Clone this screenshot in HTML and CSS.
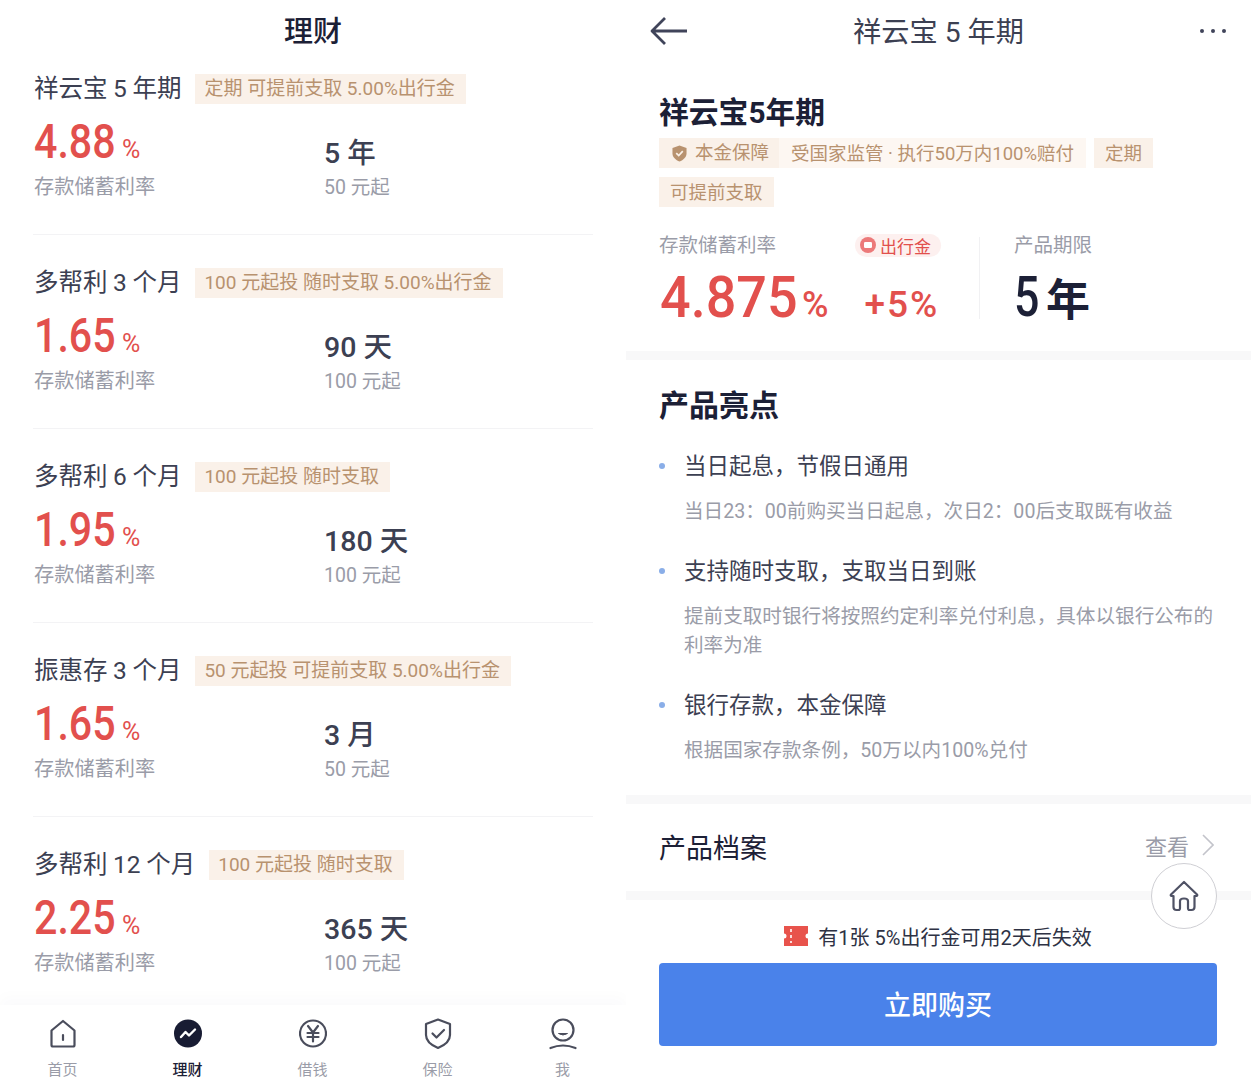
FILE: index.html
```html
<!DOCTYPE html>
<html lang="zh-CN">
<head>
<meta charset="utf-8">
<title>理财</title>
<link rel="stylesheet" href="styles.css">
</head>
<body>
<main class="screens">
  <section class="pane list-pane">
    <header class="list-head">理财</header>
    <div class="list">
      <article class="item">
        <div class="item-top"><h3 class="item-name">祥云宝 5 年期</h3><span class="item-tag">定期 可提前支取 5.00%出行金</span></div>
        <div class="item-body">
          <div class="col-rate"><div class="rate"><span class="rate-num"><b>4.88</b></span><small>%</small></div><div class="sub">存款储蓄利率</div></div>
          <div class="col-term"><div class="term">5 年</div><div class="sub">50 元起</div></div>
        </div>
      </article>
      <article class="item">
        <div class="item-top"><h3 class="item-name">多帮利 3 个月</h3><span class="item-tag">100 元起投 随时支取 5.00%出行金</span></div>
        <div class="item-body">
          <div class="col-rate"><div class="rate"><span class="rate-num"><b>1.65</b></span><small>%</small></div><div class="sub">存款储蓄利率</div></div>
          <div class="col-term"><div class="term">90 天</div><div class="sub">100 元起</div></div>
        </div>
      </article>
      <article class="item">
        <div class="item-top"><h3 class="item-name">多帮利 6 个月</h3><span class="item-tag">100 元起投 随时支取</span></div>
        <div class="item-body">
          <div class="col-rate"><div class="rate"><span class="rate-num"><b>1.95</b></span><small>%</small></div><div class="sub">存款储蓄利率</div></div>
          <div class="col-term"><div class="term">180 天</div><div class="sub">100 元起</div></div>
        </div>
      </article>
      <article class="item">
        <div class="item-top"><h3 class="item-name">振惠存 3 个月</h3><span class="item-tag">50 元起投 可提前支取 5.00%出行金</span></div>
        <div class="item-body">
          <div class="col-rate"><div class="rate"><span class="rate-num"><b>1.65</b></span><small>%</small></div><div class="sub">存款储蓄利率</div></div>
          <div class="col-term"><div class="term">3 月</div><div class="sub">50 元起</div></div>
        </div>
      </article>
      <article class="item item-last">
        <div class="item-top"><h3 class="item-name">多帮利 12 个月</h3><span class="item-tag">100 元起投 随时支取</span></div>
        <div class="item-body">
          <div class="col-rate"><div class="rate"><span class="rate-num"><b>2.25</b></span><small>%</small></div><div class="sub">存款储蓄利率</div></div>
          <div class="col-term"><div class="term">365 天</div><div class="sub">100 元起</div></div>
        </div>
      </article>
    </div>
    <nav class="tabs">
      <a class="tab">
        <svg class="tab-icon" viewBox="0 0 28 32"><path d="M14 3 L25.5 12.5 V27 Q25.5 28.5 24 28.5 H4 Q2.5 28.5 2.5 27 V12.5 Z" fill="none" stroke="#4a4d5c" stroke-width="2.2" stroke-linejoin="round"/><path d="M14 17v5" stroke="#4a4d5c" stroke-width="2.2" stroke-linecap="round"/></svg>
        <span>首页</span>
      </a>
      <a class="tab tab-on">
        <svg class="tab-icon" viewBox="0 0 28 32"><circle cx="14" cy="15.5" r="14" fill="#181c33"/><path d="M7 19 L11.5 14 L15 17.5 L21 11.5" fill="none" stroke="#fff" stroke-width="2.4" stroke-linecap="round" stroke-linejoin="round"/></svg>
        <span>理财</span>
      </a>
      <a class="tab">
        <svg class="tab-icon" viewBox="0 0 28 32"><circle cx="14" cy="15.5" r="13" fill="none" stroke="#4a4d5c" stroke-width="2.2"/><path d="M9 8 L14 14.5 L19 8 M8.5 15 H19.5 M8.5 19 H19.5 M14 14.5 V23.5" fill="none" stroke="#4a4d5c" stroke-width="2.2" stroke-linecap="round" stroke-linejoin="round"/></svg>
        <span>借钱</span>
      </a>
      <a class="tab">
        <svg class="tab-icon" viewBox="0 0 28 32"><path d="M14 1.5 L26 6 V17 C26 23 20 27.5 14 30 C8 27.5 2 23 2 17 V6 Z" fill="none" stroke="#4a4d5c" stroke-width="2.2" stroke-linejoin="round"/><path d="M8.5 15.5 L12.5 19.5 L20 12" fill="none" stroke="#4a4d5c" stroke-width="2.2" stroke-linecap="round" stroke-linejoin="round"/></svg>
        <span>保险</span>
      </a>
      <a class="tab">
        <svg class="tab-icon" viewBox="0 0 28 32"><circle cx="14" cy="12" r="10.5" fill="none" stroke="#4a4d5c" stroke-width="2.2"/><path d="M9.5 15.5 Q14 18.5 18.5 15.5 Z" fill="#4a4d5c" stroke="#4a4d5c" stroke-width="1" stroke-linejoin="round"/><path d="M1.5 30 Q14 25 26.5 30" fill="none" stroke="#4a4d5c" stroke-width="2.2" stroke-linecap="round"/></svg>
        <span>我</span>
      </a>
    </nav>
  </section>

  <section class="pane detail-pane">
    <header class="detail-head">
      <svg class="back" viewBox="0 0 38 30"><path d="M37 15 H2 M15 2 L2 15 L15 28" fill="none" stroke="#40445a" stroke-width="2.8" stroke-linejoin="round"/></svg>
      <h1 class="detail-title">祥云宝 5 年期</h1>
      <svg class="more" viewBox="0 0 28 6"><circle cx="3" cy="3" r="2" fill="#40445a"/><circle cx="14" cy="3" r="2" fill="#40445a"/><circle cx="25" cy="3" r="2" fill="#40445a"/></svg>
    </header>

    <div class="summary">
      <h2 class="prod-name">祥云宝5年期</h2>
      <div class="tag-wrap">
        <div class="tag-guard">
          <span class="guard-main">
            <svg class="guard-icon" viewBox="0 0 16 18"><path d="M8 0.5 L15.5 3 V9 C15.5 13 12 16 8 17.5 C4 16 0.5 13 0.5 9 V3 Z" fill="#b8926f"/><path d="M4.5 8.5 L7.2 11.2 L11.5 6.5" fill="none" stroke="#faf1e8" stroke-width="1.8"/></svg>
            本金保障
          </span>
          <span class="guard-note">受国家监管 · 执行50万内100%赔付</span>
        </div>
        <span class="tag">定期</span>
        <span class="tag">可提前支取</span>
      </div>
      <div class="figures">
        <div class="fig-rate">
          <div class="fig-labels">
            <span class="fig-label">存款储蓄利率</span>
            <span class="bonus">
              <svg class="bonus-icon" viewBox="0 0 16 16"><circle cx="8" cy="8" r="8" fill="#ec7a7a"/><rect x="4" y="5" width="8" height="6" rx="1.2" fill="#fff"/></svg>
              出行金
            </span>
          </div>
          <div class="fig-values">
            <span class="big-rate"><b>4.875</b></span><span class="big-pct">%</span>
            <span class="plus-rate">+5%</span>
          </div>
        </div>
        <div class="fig-divider"></div>
        <div class="fig-term">
          <div class="fig-label">产品期限</div>
          <div class="big-term"><span class="big-num"><b>5</b></span>年</div>
        </div>
      </div>
    </div>

    <div class="gap"></div>

    <div class="points">
      <h2 class="points-title">产品亮点</h2>
      <ul class="point-list">
        <li class="point">
          <h4 class="point-head">当日起息，节假日通用</h4>
          <p class="point-text">当日23：00前购买当日起息，次日2：00后支取既有收益</p>
        </li>
        <li class="point">
          <h4 class="point-head">支持随时支取，支取当日到账</h4>
          <p class="point-text">提前支取时银行将按照约定利率兑付利息，具体以银行公布的利率为准</p>
        </li>
        <li class="point">
          <h4 class="point-head">银行存款，本金保障</h4>
          <p class="point-text">根据国家存款条例，50万以内100%兑付</p>
        </li>
      </ul>
    </div>

    <div class="gap"></div>

    <div class="archive">
      <span class="archive-title">产品档案</span>
      <span class="archive-link">查看
        <svg class="chevron" viewBox="0 0 12 22"><path d="M1 1 L11 11 L1 21" fill="none" stroke="#c3c4cb" stroke-width="1.6"/></svg>
      </span>
    </div>

    <div class="gap"></div>

    <div class="buy">
      <p class="coupon">
        <svg class="coupon-icon" viewBox="0 0 24 20"><path d="M0 0 H24 V7.5 A2.5 2.5 0 0 0 24 12.5 V20 H0 V12.5 A2.5 2.5 0 0 0 0 7.5 Z" fill="#e8534c"/><path d="M7 3 V17" stroke="#fff" stroke-width="1.6" stroke-dasharray="3 3"/></svg>
        有1张 5%出行金可用2天后失效
      </p>
      <button class="buy-btn">立即购买</button>
    </div>

    <div class="home-float">
      <svg viewBox="0 0 30 32"><path d="M15 2 L28 14.5 Q28.8 15.5 27.5 16 H25.5 V27 Q25.5 30 22.5 30 H20.5 Q19 30 19 28 V21 Q19 18.5 15 18.5 Q11 18.5 11 21 V28 Q11 30 9.5 30 H7.5 Q4.5 30 4.5 27 V16 H2.5 Q1.2 15.5 2 14.5 Z" fill="none" stroke="#4f5265" stroke-width="2.2" stroke-linejoin="round"/></svg>
    </div>
  </section>
</main>
</body>
</html>
```
FILE: styles.css
```css
* { box-sizing: border-box; }
html, body { margin: 0; padding: 0; background: #fff; }
body {
  width: 1251px;
  height: 1080px;
  overflow: hidden;
  font-family: Roboto, "Noto Sans CJK SC", sans-serif;
  color: #3c4052;
}
h1, h2, h3, h4, p, ul { margin: 0; padding: 0; font-weight: 400; }
ul { list-style: none; }
b { font-weight: 500; }

.screens { display: grid; grid-template-columns: 626px 625px; height: 1080px; }
.pane { position: relative; height: 1080px; overflow: hidden; display: flex; flex-direction: column; }

/* left list */
.list-head {
  height: 62px;
  line-height: 64px;
  text-align: center;
  font-size: 29px;
  font-weight: 500;
  color: #1c2036;
  flex: none;
}
.list { flex: 1; padding: 0 33px; overflow: hidden; }
.item { height: 194px; padding-top: 33px; border-bottom: 1px solid #f3f3f5; }
.item:first-child { height: 173px; padding-top: 12px; }
.item-last { border-bottom: 0; }
.item-top { display: flex; align-items: center; height: 30px; }
.item-name { font-size: 24.5px; line-height: 32px; word-spacing: -0.5px; color: #3c4052; margin: 0 14px 0 1px; white-space: nowrap; }
.item-tag {
  height: 30px;
  line-height: 30px;
  padding: 0 11px 0 9px;
  font-size: 19px;
  background: #faf1e9;
  color: #b8926f;
  white-space: nowrap;
}
.item-body { display: grid; grid-template-columns: 291px 1fr; }
.rate { display: flex; align-items: baseline; margin-top: 9px; height: 58px; line-height: 58px; color: #e2504d; }
.rate-num { width: 89px; font-size: 49px; }
.rate-num b { display: inline-block; transform: scaleX(0.84); transform-origin: left; margin-left: 1px; }
.rate small { font-size: 25px; }
.sub { font-size: 19.5px; line-height: 28px; color: #9a9ca8; }
.col-rate .sub { margin-top: 2px; padding-left: 1px; font-size: 20.2px; }
.col-term { padding-top: 30px; }
.term { height: 40px; line-height: 40px; font-size: 28.5px; font-weight: 500; color: #3c4052; }

.tabs {
  flex: none;
  height: 75px;
  display: grid;
  grid-template-columns: repeat(5, 125px);
  padding-top: 13px;
  background: #fff;
  box-shadow: 0 -8px 14px rgba(30, 30, 80, 0.02);
}
.tab { display: flex; flex-direction: column; align-items: center; font-size: 15px; line-height: 22px; color: #9a9ca8; }
.tab-on { color: #1c2036; }
.tab-icon { width: 28px; height: 32px; margin-bottom: 9px; }
.tab-on span { font-weight: 500; }

/* right detail */
.detail-head {
  flex: none;
  height: 62px;
  display: grid;
  grid-template-columns: 1fr auto 1fr;
  align-items: center;
  padding: 0 24px;
}
.back { width: 38px; height: 30px; }
.detail-title { font-size: 28.2px; margin-bottom: 3px; color: #3c4052; white-space: nowrap; }
.more { width: 28px; height: 6px; justify-self: end; }

.summary { flex: none; height: 289px; padding: 27px 33px 0; }
.prod-name { font-size: 29.8px; line-height: 48px; font-weight: 700; color: #1c2036; }
.tag-wrap { display: flex; flex-wrap: wrap; gap: 9px 8px; margin-top: 1px; }
.tag-guard { display: flex; height: 30px; background: #fdf7f2; }
.guard-main { display: flex; align-items: center; gap: 8px; padding: 0 10px 0 13px; background: #faf1e9; }
.guard-main, .guard-note, .tag { font-size: 18.5px; line-height: 32px; color: #b8926f; white-space: nowrap; }
.guard-icon { width: 15px; height: 17px; }
.guard-note { padding: 0 12px; }
.tag { height: 30px; padding: 0 11px; background: #faf1e9; }

.figures { display: flex; margin-top: 26px; }
.fig-rate { width: 320px; height: 90px; }
.fig-divider { width: 1px; height: 82px; margin-top: 4px; background: #f1f1f3; }
.fig-labels { display: flex; align-items: center; height: 26px; }
.fig-label { font-size: 19.5px; line-height: 26px; color: #9a9ca8; }
.bonus {
  display: flex;
  align-items: center;
  gap: 4px;
  margin-left: 79px;
  margin-top: -2px;
  height: 23px;
  padding: 0 10px 0 5px;
  border-radius: 12px;
  background: #fdf0ef;
  color: #e2504d;
  font-size: 17px;
}
.bonus-icon { width: 16px; height: 16px; }
.fig-values { display: flex; align-items: baseline; margin-top: 10px; color: #e2504d; white-space: nowrap; line-height: 56px; }
.big-rate { width: 143px; font-size: 58px; }
.big-rate b { display: inline-block; transform: scaleX(0.93); transform-origin: left; margin-left: 1px; }
.big-pct, .plus-rate { font-size: 36px; font-weight: 500; }
.plus-rate { font-size: 37px; margin-left: 36px; letter-spacing: 2px; }
.fig-term { padding-left: 34px; }
.big-term { display: flex; align-items: baseline; margin-top: 10px; font-size: 44px; line-height: 56px; font-weight: 700; color: #1c2036; }
.big-num { width: 32px; font-size: 56px; }
.big-num b { display: inline-block; transform: scaleX(0.8); transform-origin: left; font-weight: 500; }

.gap { flex: none; height: 9px; background: #f8f8f9; }

.points { flex: none; height: 435px; padding: 22px 33px 0; }
.points-title { font-size: 30px; line-height: 48px; font-weight: 700; color: #1c2036; }
.point-list { margin-top: 19px; }
.point { position: relative; padding-left: 25px; margin-bottom: 28px; }
.point::before {
  content: "";
  position: absolute;
  left: 0;
  top: 14px;
  width: 6px;
  height: 6px;
  border-radius: 50%;
  background: #8aaee8;
}
.point-head { font-size: 22.5px; line-height: 34px; color: #3c4052; }
.point-text { margin-top: 14px; font-size: 19.6px; line-height: 29px; color: #9a9ca8; }

.archive {
  flex: none;
  height: 87px;
  padding: 0 37px 2px 33px;
  display: flex;
  align-items: center;
  justify-content: space-between;
}
.archive-title { font-size: 27px; color: #1c2036; }
.archive-link { display: flex; align-items: center; gap: 13px; margin-bottom: 4px; font-size: 22px; color: #9a9ca8; }
.chevron { width: 12px; height: 22px; }

.buy { flex: 1; padding: 20px 34px 0 33px; }
.coupon { display: flex; align-items: center; justify-content: center; gap: 10px; height: 32px; font-size: 20px; color: #2e3244; }
.coupon-icon { width: 24px; height: 20px; }
.buy-btn {
  display: block;
  width: 100%;
  height: 83px;
  margin-top: 11px;
  padding: 0 0 2px;
  border: 0;
  border-radius: 4px;
  background: #4a82ea;
  color: #fff;
  font-family: inherit;
  font-size: 27px;
  font-weight: 500;
}

.home-float {
  position: absolute;
  left: 525px;
  top: 863px;
  width: 66px;
  height: 66px;
  border-radius: 50%;
  background: #fff;
  border: 1px solid #cfcfd4;
  display: flex;
  align-items: center;
  justify-content: center;
}
.home-float svg { width: 30px; height: 32px; }
```
